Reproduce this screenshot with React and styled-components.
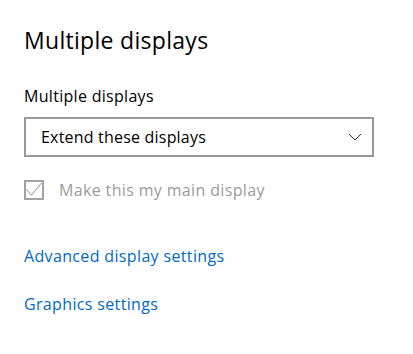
import React from 'react';
import styled, { createGlobalStyle } from 'styled-components';

const GlobalStyle = createGlobalStyle`
  html, body {
    margin: 0;
    padding: 0;
    background: #ffffff;
  }
  body {
    font-family: "Open Sans", "Noto Sans", "Liberation Sans", sans-serif;
  }
`;

const Page = styled.div`
  width: 413px;
  height: 354px;
  box-sizing: border-box;
  padding: 25px 0 0 24px;
  display: flex;
  flex-direction: column;
  background: #fff;
`;

const Heading = styled.h2`
  margin: 0;
  font-size: 23px;
  line-height: 30px;
  letter-spacing: 0.3px;
  font-weight: 400;
  color: #000;
`;

const Label = styled.div`
  margin-top: 30px;
  font-size: 16px;
  line-height: 22px;
  letter-spacing: 0.3px;
  color: #000;
`;

const Select = styled.div`
  margin-top: 10px;
  width: 350px;
  height: 40px;
  box-sizing: border-box;
  border: 2px solid #999999;
  display: flex;
  align-items: center;
  justify-content: space-between;
  padding: 0 10px 0 15px;
  font-size: 16px;
  letter-spacing: 0.2px;
  color: #000;
  cursor: pointer;
`;

const CheckRow = styled.label`
  margin-top: 23px;
  display: flex;
  align-items: center;
  gap: 15px;
  height: 20px;
  font-size: 16px;
  letter-spacing: 0.35px;
  color: ${p => (p.disabled ? '#9c9c9c' : '#000')};
`;

const Box = styled.span`
  width: 20px;
  height: 20px;
  box-sizing: border-box;
  border: 2px solid #a3a3a3;
  display: flex;
  align-items: center;
  justify-content: center;
`;

const Link = styled.a`
  margin-top: ${p => p.gap}px;
  font-size: 16px;
  line-height: 22px;
  letter-spacing: 0.35px;
  color: #0069c8;
  text-decoration: none;
  align-self: flex-start;
`;

function Chevron() {
  return (
    <svg width="14" height="8" viewBox="0 0 14 8">
      <path d="M1 1 L7 7 L13 1" fill="none" stroke="#333" strokeWidth="1" />
    </svg>
  );
}

function Check() {
  return (
    <svg width="16" height="16" viewBox="0 0 16 16">
      <path d="M0.5 7.5 L5.5 13 L15.5 1" fill="none" stroke="#a3a3a3" strokeWidth="1.1" />
    </svg>
  );
}

export default function App() {
  return (
    <>
      <GlobalStyle />
      <Page>
        <Heading>Multiple displays</Heading>
        <Label>Multiple displays</Label>
        <Select>
          <span>Extend these displays</span>
          <Chevron />
        </Select>
        <CheckRow disabled>
          <Box><Check /></Box>
          <span>Make this my main display</span>
        </CheckRow>
        <Link href="#" gap={45}>Advanced display settings</Link>
        <Link href="#" gap={26}>Graphics settings</Link>
      </Page>
    </>
  );
}
